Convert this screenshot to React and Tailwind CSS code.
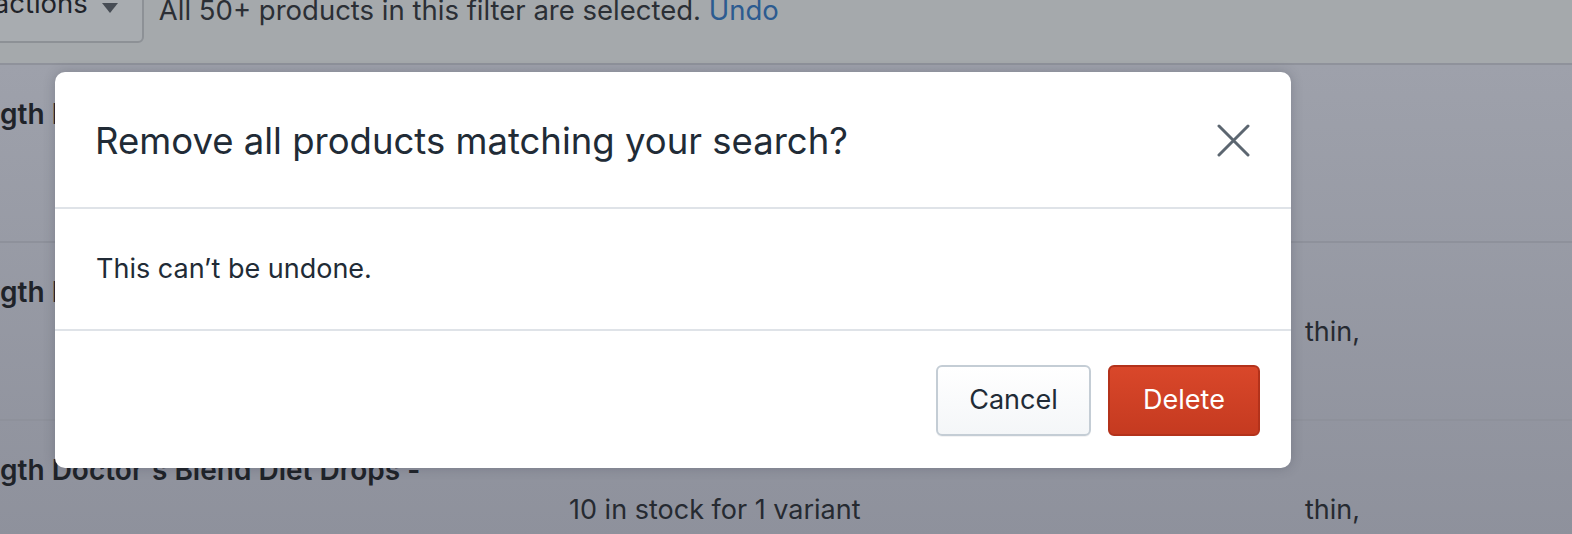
const rows = [
  { name: "gth Doctor's Blend Diet Drops -", stock: "", tags: "" },
  { name: "gth Doctor's Blend Diet Drops -", stock: "10 in stock for 1 variant", tags: "thin," },
  { name: "gth Doctor's Blend Diet Drops -", stock: "10 in stock for 1 variant", tags: "thin," },
];

export default function App() {
  return (
    <div
      className="relative w-[1572px] h-[534px] overflow-hidden bg-[#9c9fa9] text-[#1f2329]"
      style={{ fontFamily: "Inter, 'Noto Sans', sans-serif" }}
    >
      {/* page behind the overlay */}
      <div className="h-[65px] bg-[#a5a9ac] border-b-2 border-[#8f929b] flex items-start">
        <div className="-mt-[30px] -ml-[92px] h-[73px] pl-[20px] pr-[24px] flex items-end pb-[18px] gap-[14px] border-2 border-[#8d9196] rounded-b-[6px] bg-[#a8acb0] text-[27.5px] leading-[40px]">
          <span>Bulk actions</span>
          <svg width="16" height="10" viewBox="0 0 16 10" className="mb-[10px]">
            <path d="M0 0h16L8 10z" fill="#474d55" />
          </svg>
        </div>
        <p className="ml-[15px] -mt-[10px] text-[27.5px] leading-[40px] text-[#2b2f35]">
          All 50+ products in this filter are selected.{" "}
          <span className="text-[#2c5b90]">Undo</span>
        </p>
      </div>

      <div className="bg-gradient-to-b from-[#9ea1ab] to-[#8c8f9a]">
        {rows.map((r, i) => (
          <div
            key={i}
            className="h-[178px] border-b-2 border-[#8e919b] grid grid-cols-[569px_736px_1fr] pt-[29px]"
          >
            <div className="text-[28px] leading-[40px] font-semibold whitespace-nowrap">{r.name}</div>
            <div className="pt-[40px] text-[27px] leading-[40px] text-[#262a31]">{r.stock}</div>
            <div className="pt-[40px] text-[27px] leading-[40px] text-[#262a31]">{r.tags}</div>
          </div>
        ))}
      </div>

      {/* modal */}
      <div className="absolute left-[55px] top-[72px] w-[1236px] bg-white rounded-[10px] shadow-[0_0_12px_rgba(40,44,60,0.25)] text-[#212b36]">
        <div className="h-[137px] pl-[40px] pr-[41px] pt-[2px] flex items-center justify-between border-b-2 border-[#dfe3e8]">
          <h2 className="text-[36.5px] leading-[56px] font-normal">
            Remove all products matching your search?
          </h2>
          <button className="text-[#5c6670]">
            <svg width="33" height="33" viewBox="0 0 33 33" fill="none" stroke="currentColor" strokeWidth="3" strokeLinecap="round">
              <path d="M2 2l29 29M31 2L2 31" />
            </svg>
          </button>
        </div>
        <div className="h-[122px] px-[41px] flex items-center border-b-2 border-[#dfe3e8]">
          <p className="text-[27px] leading-[40px]">This can’t be undone.</p>
        </div>
        <div className="h-[137px] pl-[32px] pr-[31px] pt-[1px] flex items-center justify-end gap-[17px]">
          <button className="w-[155px] h-[71px] rounded-[6px] border-2 border-[#c4cdd5] bg-gradient-to-b from-white to-[#f4f6f8] text-[27px] text-[#212b36] shadow-[0_1px_0_rgba(22,29,37,0.05)]">
            Cancel
          </button>
          <button className="w-[152px] h-[71px] rounded-[6px] border-2 border-[#b3321b] bg-gradient-to-b from-[#d9472a] to-[#c53a20] text-[27px] text-white">
            Delete
          </button>
        </div>
      </div>
    </div>
  );
}
